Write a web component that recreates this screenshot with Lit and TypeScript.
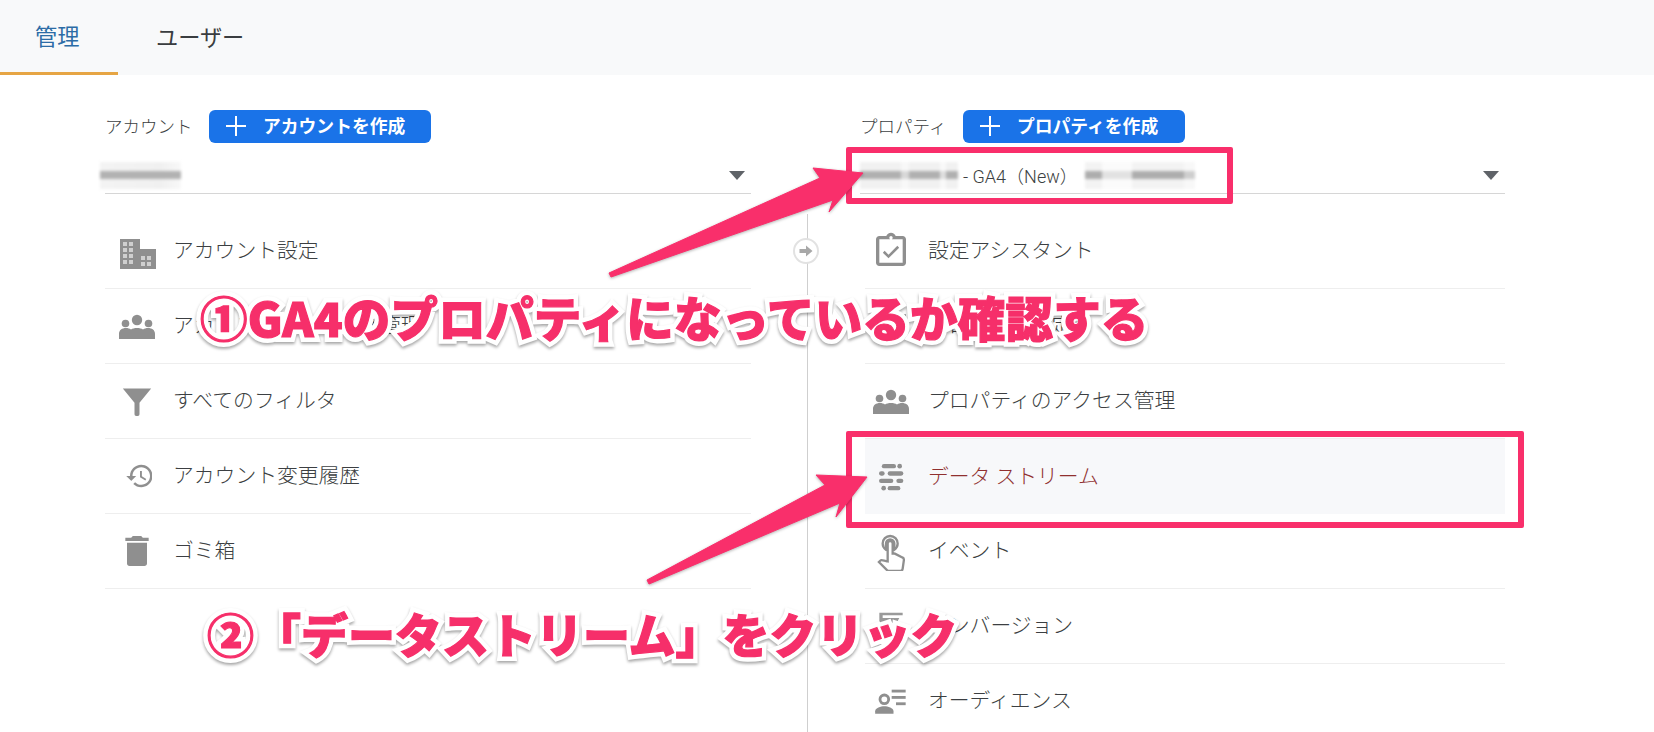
import { LitElement, html, css, svg } from "lit";
import { customElement } from "lit/decorators.js";

const ic = (size: number, body: unknown, box = "0 0 24 24") => html`<svg class="ic" width=${size} height=${size} viewBox=${box} fill="#8f8f8f">${body}</svg>`;

const windows = [[5,3],[11,3],[5,9],[11,9],[5,15],[11,15],[5,21],[11,21],[23,17],[29,17],[23,23],[29,23]];

const icons = {
  domain: ic(40, svg`<path d="M3 8h20v10h16v20H3z"/>${windows.map(([x, y]) => svg`<rect x=${x + 1} y=${y + 8} width="4" height="4" fill="#cfcfcf"/>`)}`, "0 0 40 40"),
  group: ic(40, svg`<circle cx="20" cy="14" r="5.2"/><circle cx="8.5" cy="17.500" r="3.8"/><circle cx="31.5" cy="17.500" r="3.8"/><path d="M2 33v-5c0-4 3-6 7-6 2 0 3.500.5 5 1.500 1.500-1 3.500-1.500 6-1.500s4.500.5 6 1.500c1.500-1 3-1.500 5-1.500 4 0 7 2 7 6v5z"/>`, "0 0 40 40"),
  filter: ic(40, svg`<path d="M3.500 4.500h17l-7 8.500V20a1 1 0 0 1-1 1h-1a1 1 0 0 1-1-1v-7z"/>`),
  history: ic(30, svg`<path d="M13 3c-4.970 0-9 4.030-9 9H1l3.890 3.890.07.14L9 12H6c0-3.870 3.130-7 7-7s7 3.130 7 7-3.130 7-7 7c-1.930 0-3.680-.79-4.940-2.060l-1.420 1.420C8.270 19.990 10.510 21 13 21c4.970 0 9-4.030 9-9s-4.030-9-9-9zm-1 5v5l4.280 2.540.72-1.210-3.500-2.080V8H12z"/>`, "-2.400 0 24 24"),
  trash: ic(40, svg`<path d="M6 19.500c0 .8.700 1.500 1.500 1.500h9c.8 0 1.500-.7 1.500-1.500V7H6v12.500zM19 4h-3.500l-1-1h-5l-1 1H5v2h14V4z"/>`),
  clipboard: ic(40, svg`<path d="M19 3h-4.180C14.400 1.840 13.300 1 12 1s-2.400.84-2.820 2H5c-1.100 0-2 .9-2 2v14c0 1.100.9 2 2 2h14c1.100 0 2-.9 2-2V5c0-1.100-.9-2-2-2zm-7 0c.55 0 1 .45 1 1s-.45 1-1 1-1-.45-1-1 .45-1 1-1zm7 16H5V5h14v14zM10.500 16.400l-3.400-3.400 1.100-1.100 2.300 2.300 5.300-5.300 1.100 1.100-6.400 6.400z"/>`),
  tune: ic(40, svg`<path d="M3 17v2h6v-2H3zM3 5v2h10V5H3zm10 16v-2h8v-2h-8v-2h-2v6h2zM7 9v2H3v2h4v2h2V9H7zm14 4v-2H11v2h10zm-6-4h2V7h4V5h-4V3h-2v6z"/>`),
  streams: ic(40, svg`<rect x="6.500" y="4.200" width="8.500" height="2.600" rx="1.300"/><circle cx="17.200" cy="5.500" r="1.400"/><rect x="4.800" y="8.600" width="3.400" height="2.600" rx="1.300"/><rect x="10" y="8.600" width="9.400" height="2.600" rx="1.300"/><rect x="4.800" y="13" width="8.600" height="2.600" rx="1.300"/><rect x="15.200" y="13" width="4.200" height="2.600" rx="1.300"/><circle cx="7.600" cy="18.700" r="1.400"/><rect x="10" y="17.400" width="7.600" height="2.600" rx="1.300"/>`),
  touch: ic(40, svg`<path d="M9 11.240V7.500C9 6.120 10.120 5 11.500 5S14 6.120 14 7.500v3.740c1.210-.81 2-2.180 2-3.740C16 5.010 13.990 3 11.500 3S7 5.010 7 7.500c0 1.560.79 2.930 2 3.740zm9.840 4.630l-4.540-2.260c-.17-.07-.35-.11-.54-.11H13v-6c0-.83-.67-1.500-1.500-1.500S10 6.670 10 7.500v10.740c-3.600-.76-3.540-.75-3.670-.75-.31 0-.59.13-.79.33l-.79.8 4.940 4.940c.27.27.65.44 1.060.44h6.790c.75 0 1.330-.55 1.440-1.280l.75-5.270c.01-.07.02-.14.02-.2 0-.62-.38-1.160-.91-1.380z" fill="none" stroke="#8f8f8f" stroke-width="1.400"/>`),
  flag: ic(40, svg`<path d="M5 4h14v1.600H7V21H5V4zm2 3.200h10l-1.400 2.500 1.400 2.500H7z" fill-opacity=".9"/>`),
  audience: ic(40, svg`<circle cx="8" cy="11" r="2.600" fill="none" stroke="#8f8f8f" stroke-width="1.700"/><path d="M2.500 19.600v-1.400c0-2 3.400-3 5.500-3s5.500 1 5.500 3v1.400h-11z"/><rect x="12.400" y="5.200" width="8.400" height="1.700"/><rect x="12.400" y="9" width="8.400" height="1.700"/><rect x="15" y="12.800" width="5.800" height="1.700"/>`),
};

@customElement("app-root")
export class AppRoot extends LitElement {
  static styles = css`
    :host { display: block; position: relative; width: 1654px; height: 732px; overflow: hidden; background: #fff;
      font-family: Roboto, "Noto Sans CJK JP", sans-serif; color: #3c3f42; }
    .tabs { display: flex; height: 75px; background: #f8f9fa; font-size: 22.2px; }
    .tab { display: flex; align-items: center; box-sizing: border-box; height: 75px; padding-bottom: 4px; }
    .tab.on { width: 118px; padding-left: 35px; padding-bottom: 3px; color: #2c6ca6; border-bottom: 3px solid #e6a544; }
    .tab.off { margin-left: 38px; color: #3a3d40; }
    .cols { display: grid; grid-template-columns: 646px 109px 645px; padding-left: 105px; height: 657px; }
    .head { display: flex; align-items: center; margin-top: 35px; height: 33px; }
    .lbl { width: 104px; font-size: 17.5px; font-weight: 300; padding-bottom: 2px; flex: none; }
    .right .lbl { width: 103px; }
    .btn { display: flex; align-items: center; height: 33px; width: 222px; background: #1a73e8; color: #fff; border-radius: 6px;
      font-size: 17.8px; font-weight: 700; box-sizing: border-box; padding-bottom: 3px; }
    .btn svg { margin: 1px 17px 0 17px; }
    .sel { display: flex; align-items: center; height: 51px; box-sizing: border-box; border-bottom: 1px solid #d6d6d6;
      padding-top: 14px; font-size: 18px; font-weight: 300; }
    .caret { margin-left: auto; margin-right: 6px; width: 0; height: 0; border-left: 8px solid transparent;
      border-right: 8px solid transparent; border-top: 9px solid #5f6368; }
    .blur { display: inline-block; height: 27px; filter: blur(1.5px); flex: none; }
    .b1 { width: 81px; margin-left: -5px;
      background: linear-gradient(180deg, transparent 33%, #b2b2b2 33% 63%, transparent 63%),
        linear-gradient(90deg, #f3f3f3, #f0f0f0 75%, #f8f8f8); }
    .b2 { width: 98px; margin-right: 5px;
      background: linear-gradient(90deg, transparent 0 42%, rgba(255,255,255,.5) 42% 50%, transparent 50% 82%, rgba(255,255,255,.6) 82% 88%, transparent 88%),
        linear-gradient(180deg, transparent 33%, #b0b0b0 33% 63%, transparent 63%), #f1f1f1; }
    .b3 { width: 110px; margin-left: 7px;
      background: linear-gradient(90deg, transparent 0 15%, rgba(255,255,255,.65) 15% 43%, transparent 43% 90%, rgba(255,255,255,.4) 90%),
        linear-gradient(180deg, transparent 33%, #adadad 33% 63%, transparent 63%), #f3f3f3; }
    .rows { margin-top: 20px; }
    .row { display: flex; align-items: center; height: 75px; box-sizing: border-box; border-bottom: 1px solid #eeeeee;
      font-size: 20.8px; font-weight: 300; padding-left: 10px; }
    .t { padding-bottom: 4px; }
    .right .rows { margin-left: 5px; }
    .right .row { padding-left: 4px; }
    .row.hl { background: #f7f8fa; color: #90302f; border-bottom: 0; }
    .ibox { width: 44px; height: 44px; display: flex; align-items: center; justify-content: center; margin-right: 14px; flex: none; }
    .right .ibox { margin-right: 15px; }
    .ic { display: block; flex: none; }
    .mid { padding-left: 56px; padding-top: 139px; position: relative; }
    .line { width: 1px; height: 100%; background: #cfcfcf; }
    .swap { position: absolute; left: 42px; top: 163px; width: 26px; height: 26px; border-radius: 50%; background: #fff;
      border: 2px solid #e2e2e2; box-sizing: border-box; display: flex; align-items: center; justify-content: center; }
    .over { position: absolute; inset: 0; pointer-events: none; }
    .box { position: absolute; border: 6px solid #f92f6b; border-radius: 2px; box-sizing: border-box; }
    .box.one { left: 846px; top: 147px; width: 387px; height: 57px; }
    .box.two { left: 846px; top: 431px; width: 678px; height: 97px; }
    .arrows { position: absolute; left: 0; top: 0; filter: drop-shadow(0 1px 1.5px rgba(0,0,0,.3)); }
    .note { position: absolute; white-space: nowrap; font-family: "Noto Sans CJK JP", "Noto Sans", sans-serif; font-weight: 900;
      color: #f62f6a; line-height: 60px; -webkit-text-stroke: 1.2px #f62f6a;
      filter: drop-shadow(0 2px 1.5px rgba(0,0,0,.35)); }
    .note::before { content: attr(data-t); position: absolute; left: 0; top: 0; z-index: -1; color: #fff;
      -webkit-text-stroke: 10px #fff; }
    .note.n1 { left: 200px; top: 287px; font-size: 47.5px; letter-spacing: 0.2px; }
    .note.n2 { left: 207px; top: 603px; font-size: 47px; }
  `;

  private row(icon: unknown, label: string, hl = false) {
    return html`<div class="row ${hl ? "hl" : ""}"><span class="ibox">${icon}</span><span class="t">${label}</span></div>`;
  }

  private plus() {
    return html`<svg width="20" height="20" viewBox="0 0 20 20" fill="#fff"><rect x="9" y="0" width="2" height="20"/><rect x="0" y="9" width="20" height="2"/></svg>`;
  }

  render() {
    return html`
      <div class="tabs">
        <div class="tab on">管理</div>
        <div class="tab off">ユーザー</div>
      </div>
      <div class="cols">
        <section>
          <div class="head"><span class="lbl">アカウント</span><span class="btn">${this.plus()}アカウントを作成</span></div>
          <div class="sel"><span class="blur b1"></span><span class="caret"></span></div>
          <div class="rows">
            ${this.row(icons.domain, "アカウント設定")}
            ${this.row(icons.group, "アカウントのアクセス管理")}
            ${this.row(icons.filter, "すべてのフィルタ")}
            ${this.row(icons.history, "アカウント変更履歴")}
            ${this.row(icons.trash, "ゴミ箱")}
          </div>
        </section>
        <div class="mid">
          <div class="line"></div>
          <div class="swap">
            <svg width="16" height="16" viewBox="0 0 16 16" fill="#a8a8a8"><path d="M1.500 6h6.500V2.500L14.500 8 8 13.500V10H1.500z"/></svg>
          </div>
        </div>
        <section class="right">
          <div class="head"><span class="lbl">プロパティ</span><span class="btn">${this.plus()}プロパティを作成</span></div>
          <div class="sel"><span class="blur b2"></span><span>- GA4（New）</span><span class="blur b3"></span><span class="caret"></span></div>
          <div class="rows">
            ${this.row(icons.clipboard, "設定アシスタント")}
            ${this.row(icons.tune, "プロパティ設定")}
            ${this.row(icons.group, "プロパティのアクセス管理")}
            ${this.row(icons.streams, "データ ストリーム", true)}
            ${this.row(icons.touch, "イベント")}
            ${this.row(icons.flag, "コンバージョン")}
            ${this.row(icons.audience, "オーディエンス")}
          </div>
        </section>
      </div>
      <div class="over">
        <div class="box one"></div>
        <div class="box two"></div>
        <svg class="arrows" width="1654" height="732" viewBox="0 0 1654 732">
          <polygon fill="#f92f6b" stroke="#f92f6b" stroke-width="1" stroke-linejoin="round" points="609,273 820,178 813,168 863,173 829,212 833,200 611,277"/>
          <polygon fill="#f92f6b" stroke="#f92f6b" stroke-width="1" stroke-linejoin="round" points="647,580 825,485 816,475 867,477 836,517 840,503 649,584"/>
        </svg>
        <div class="note n1" data-t="①GA4のプロパティになっているか確認する">①GA4のプロパティになっているか確認する</div>
        <div class="note n2" data-t="②「データストリーム」をクリック">②「データストリーム」をクリック</div>
      </div>
    `;
  }
}
